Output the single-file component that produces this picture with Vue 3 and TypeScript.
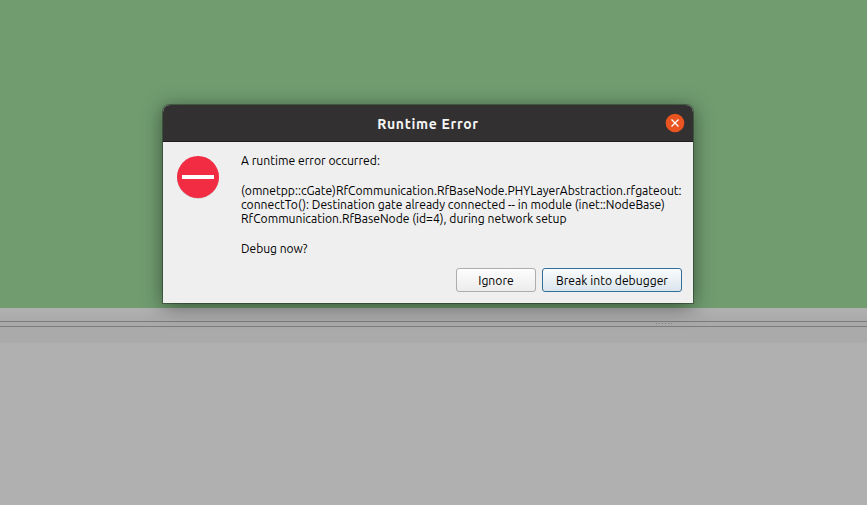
<script setup lang="ts">
interface MessageLine {
  text: string
  stretch: number
}

const paragraphs: MessageLine[][] = [
  [{ text: 'A runtime error occurred:', stretch: 0.937 }],
  [
    { text: '(omnetpp::cGate)RfCommunication.RfBaseNode.PHYLayerAbstraction.rfgateout:', stretch: 0.933 },
    { text: 'connectTo(): Destination gate already connected -- in module (inet::NodeBase)', stretch: 0.933 },
    { text: 'RfCommunication.RfBaseNode (id=4), during network setup', stretch: 0.932 },
  ],
  [{ text: 'Debug now?', stretch: 0.925 }],
]
</script>

<template>
  <main class="desktop">
    <div class="canvas"></div>
    <div class="toolbar"></div>
    <div class="splitter">
      <svg class="grip" width="18" height="3" viewBox="0 0 18 3">
        <path d="M1 1.5H17" stroke="#858585" stroke-dasharray="1 2" />
      </svg>
    </div>
    <div class="tabs"></div>
    <div class="log"></div>

    <section class="dialog" role="dialog">
      <header class="titlebar">
        <h1><span>Runtime Error</span></h1>
        <button class="close" aria-label="Close">
          <svg width="20" height="20" viewBox="0 0 20 20">
            <circle cx="10" cy="10" r="9.3" fill="#e95420" />
            <path d="M6.5 6.5L13.5 13.5M13.5 6.5L6.5 13.5" stroke="#fff" stroke-width="1.4" fill="none" />
          </svg>
        </button>
      </header>
      <div class="content">
        <svg class="icon" width="42" height="43" viewBox="0 0 42 43">
          <circle cx="21" cy="21.7" r="21" fill="#c9c4c4" />
          <circle cx="21" cy="21" r="21" fill="#f22c42" />
          <rect x="5" y="19" width="32" height="4" fill="#fff" />
        </svg>
        <div class="message">
          <p v-for="(lines, i) in paragraphs" :key="i">
            <span v-for="line in lines" :key="line.text" :style="{ transform: `scaleX(${line.stretch})` }">{{ line.text }}</span>
          </p>
        </div>
      </div>
      <footer class="actions">
        <button class="action ignore"><span>Ignore</span></button>
        <button class="action primary"><span>Break into debugger</span></button>
      </footer>
    </section>
  </main>
</template>

<style>
body {
  margin: 0;
  overflow: hidden;
}
</style>

<style scoped>
.desktop {
  position: relative;
  display: flex;
  flex-direction: column;
  width: 867px;
  height: 505px;
  overflow: hidden;
  background: #b0b0b0;
  font-family: Ubuntu, "Noto Sans", sans-serif;
}
.canvas {
  height: 308px;
  background: #709c70;
}
.toolbar {
  height: 13px;
  background: linear-gradient(#b1b1b1, #a9a9a9);
}
.splitter {
  box-sizing: border-box;
  height: 6px;
  padding-left: 655px;
  border-top: 1px solid #7d7d7d;
  border-bottom: 1px solid #7d7d7d;
  background: #a9a9a9;
}
.grip {
  display: block;
}
.tabs {
  height: 16px;
  background: #aaa;
}
.log {
  flex: 1;
  background: #b0b0b0;
}
.dialog {
  position: absolute;
  left: 163px;
  top: 105px;
  display: flex;
  flex-direction: column;
  width: 530px;
  height: 198px;
  border-radius: 7px 7px 0 0;
  background: #efefef;
  box-shadow: 0 0 0 1px rgba(0, 0, 0, 0.3), 0 3px 20px rgba(0, 0, 0, 0.5);
}
.titlebar {
  box-sizing: border-box;
  display: grid;
  grid-template-columns: 36px 1fr 36px;
  align-items: center;
  height: 37px;
  border-bottom: 1px solid #1f1d1e;
  border-radius: 7px 7px 0 0;
  background: #333031;
}
h1 {
  grid-column: 2;
  margin: 0;
  padding-top: 2px;
  color: #f5f5f5;
  font-size: 14px;
  font-weight: 700;
  letter-spacing: 0.67px;
  line-height: 20px;
  text-align: center;
}
button {
  padding: 0;
  font-family: inherit;
}
.close {
  display: flex;
  width: 20px;
  height: 20px;
  margin-left: 8px;
  border: 0;
  background: none;
}
.content {
  display: flex;
  gap: 22px;
  height: 126px;
  padding-left: 14px;
}
.icon {
  flex: none;
  margin-top: 14px;
}
.message {
  display: flex;
  flex-direction: column;
  gap: 16px;
  padding-top: 11px;
  color: #000;
  font-size: 13px;
  line-height: 14px;
  white-space: nowrap;
}
p {
  margin: 0;
}
p span {
  display: block;
  width: max-content;
  transform-origin: 0 50%;
}
.actions {
  display: flex;
  justify-content: flex-end;
  gap: 6px;
  padding-right: 11px;
}
.action {
  box-sizing: border-box;
  height: 24px;
  border: 1px solid #adadad;
  border-radius: 3px;
  background: linear-gradient(#fdfdfd, #ececec);
  color: #000;
  font-size: 13px;
  line-height: 22px;
  white-space: nowrap;
}
.action span {
  display: block;
  transform: scaleX(0.935);
}
.ignore {
  width: 80px;
}
.primary {
  width: 140px;
  border-color: #306f98;
  background: linear-gradient(#fafcfd, #dae5ec);
}
</style>
